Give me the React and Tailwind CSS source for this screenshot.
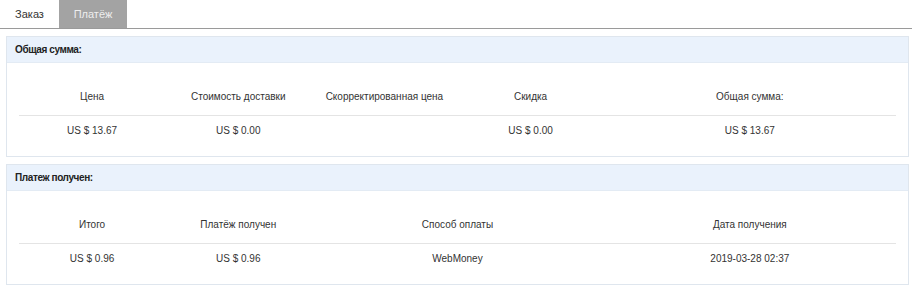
import React, { useState } from 'react';

const summary = {
    columns: [
        { label: 'Цена', span: 'col-span-1' },
        { label: 'Стоимость доставки', span: 'col-span-1' },
        { label: 'Скорректированная цена', span: 'col-span-1' },
        { label: 'Скидка', span: 'col-span-1' },
        { label: 'Общая сумма:', span: 'col-span-2' },
    ],
    values: ['US $ 13.67', 'US $ 0.00', '', 'US $ 0.00', 'US $ 13.67'],
};

const payment = {
    columns: [
        { label: 'Итого', span: 'col-span-1' },
        { label: 'Платёж получен', span: 'col-span-1' },
        { label: 'Способ оплаты', span: 'col-span-2' },
        { label: 'Дата получения', span: 'col-span-2' },
    ],
    values: ['US $ 0.96', 'US $ 0.96', 'WebMoney', '2019-03-28 02:37'],
};

const Panel = ({ title, data }) => (
    <div className="border border-[#dfe6ee] bg-white">
        <div className="h-[26px] bg-[#eaf2fc] border-b border-[#e3ebf4] px-2 flex items-center text-[10px] tracking-[-0.4px] font-bold text-[#222]">
            {title}
        </div>
        <div className="px-3 pt-[15px] pb-[12px]">
            <div className="grid grid-cols-6 h-[38px] items-center border-b border-[#e4e4e4]">
                {data.columns.map((col, i) => (
                    <div key={i} className={`${col.span} text-center`}>{col.label}</div>
                ))}
            </div>
            <div className="grid grid-cols-6 h-[28px] items-center">
                {data.values.map((v, i) => (
                    <div key={i} className={`${data.columns[i].span} text-center`}>{v}</div>
                ))}
            </div>
        </div>
    </div>
);

const App = () => {
    const [tab, setTab] = useState('payment');

    return (
        <div className="w-[912px] h-[290px] bg-white text-[10px] text-[#333] font-['Liberation_Sans',Arial,sans-serif]">
            {/* tabs */}
            <div className="flex h-[29px] border-b border-[#9a9a9a]">
                <button
                    type="button"
                    onClick={() => setTab('order')}
                    className={`w-[59px] h-[28px] text-[11px] ${tab === 'order' ? 'bg-[#a3a3a3] text-[#eeeeee]' : 'bg-white text-[#333]'}`}
                >
                    Заказ
                </button>
                <button
                    type="button"
                    onClick={() => setTab('payment')}
                    className={`w-[68px] h-[28px] text-[11px] ${tab === 'payment' ? 'bg-[#a3a3a3] text-[#eeeeee]' : 'bg-white text-[#333]'}`}
                >
                    Платёж
                </button>
            </div>

            <div className="pl-[6px] pr-[3px] pt-[7px] flex flex-col gap-[7px]">
                <Panel title="Общая сумма:" data={summary} />
                <Panel title="Платеж получен:" data={payment} />
            </div>
        </div>
    );
};

export default App;
